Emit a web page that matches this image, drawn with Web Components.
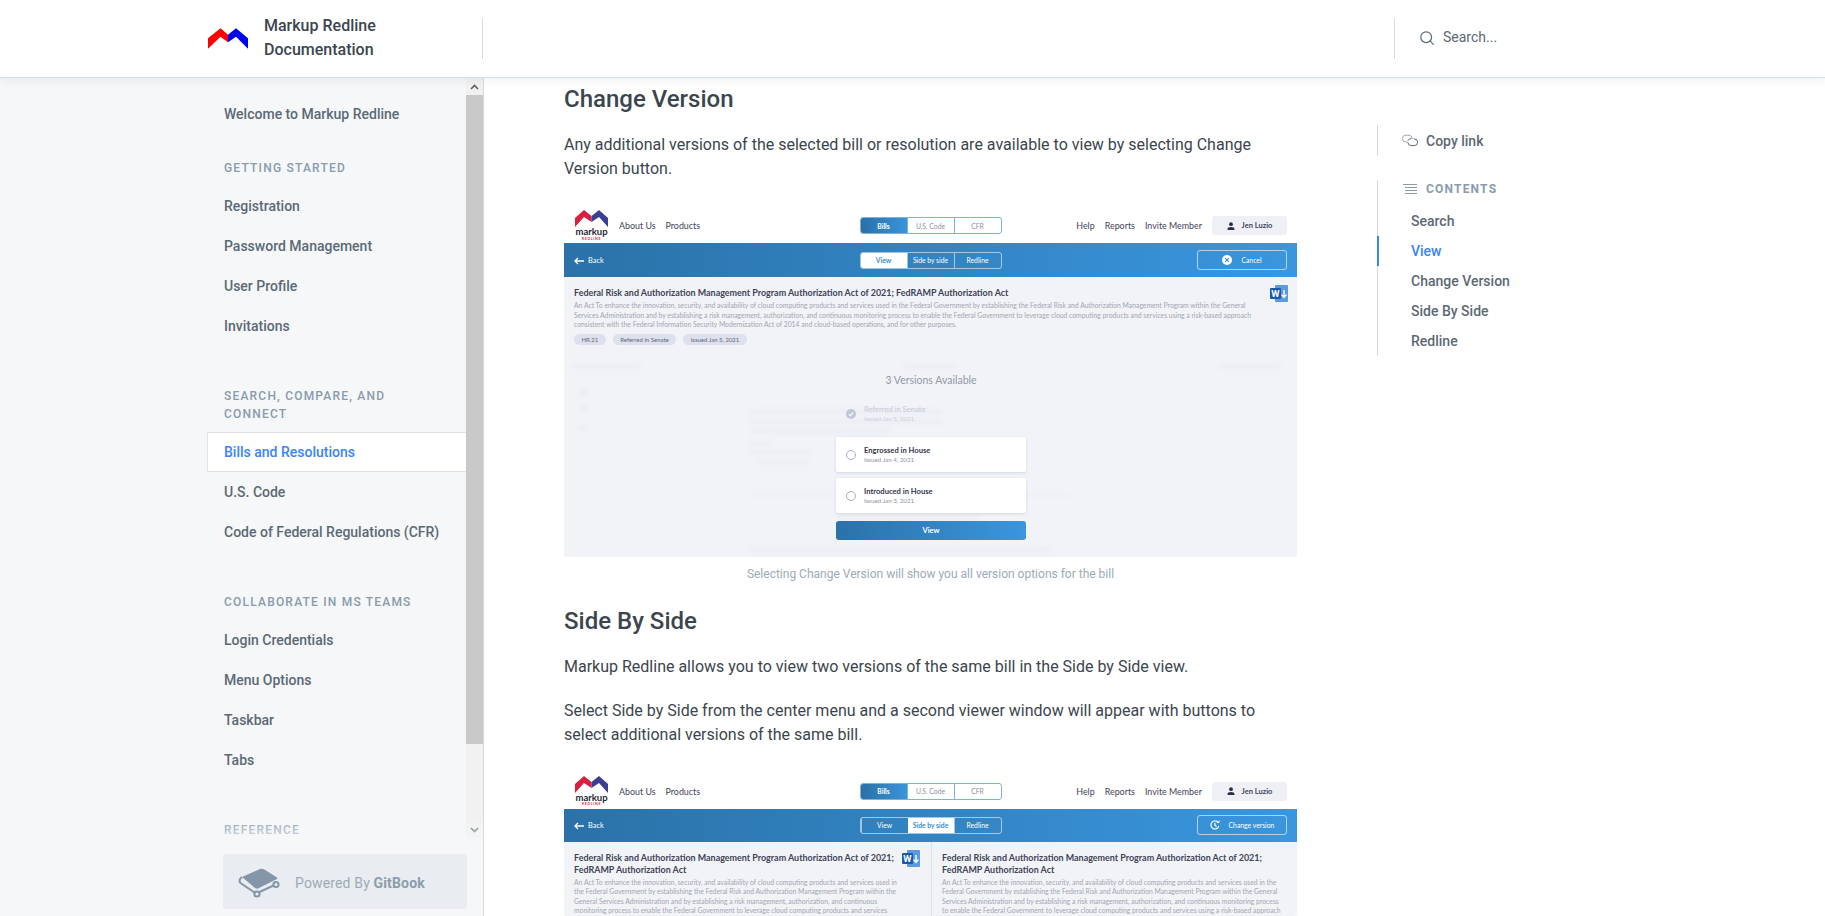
<!DOCTYPE html>
<html lang="en">
<head>
<meta charset="utf-8">
<title>Change Version - Markup Redline Documentation</title>
<style>
    html, body { margin: 0; height: 916px; overflow: hidden; background: #fff; }
    body { font-family: Roboto, "Liberation Sans", sans-serif; }
</style>
</head>
<body>
<doc-app></doc-app>
<script>
const LOGO_POINTS = {
    red: '0,10 12.5,0 20,6.5 20,14 12.5,8.5 0,20.5',
    blue: '20,6.5 28,0 40,10 40,20.5 28,8.5 20,14'
};

class DocHeader extends HTMLElement {
    constructor() {
        super();
        this.attachShadow({ mode: 'open' }).innerHTML = `
            <style>
                :host { display: flex; height: 77px; background: #fff; border-bottom: 1px solid #d4dce4; box-shadow: 0 3px 8px 0 rgba(116,129,141,.1); position: relative; z-index: 3; }
                .brand { width: 483px; display: flex; align-items: center; margin: 18px 0; padding-left: 208px; box-sizing: border-box; border-right: 1px solid #d4dadf; }
                svg.logo { width: 40px; height: 21px; margin: 0 16px 0 0; flex: none; }
                .title { font-size: 16px; line-height: 24px; font-weight: 500; color: #3b454e; margin-top: -1px; }
                .middle { flex: 1; }
                .search { width: 431px; margin: 18px 0; box-sizing: border-box; border-left: 1px solid #d4dadf; display: flex; align-items: center; padding: 0 0 3px 25px; gap: 9px; font-size: 14px; color: #5c6975; }
                .search svg { width: 14px; height: 14px; margin-top: 2px; }
            </style>
            <div class="brand">
                <svg class="logo" viewBox="0 0 40 20.5"><polygon fill="#ff0000" points="${LOGO_POINTS.red}"/><polygon fill="#0000f0" points="${LOGO_POINTS.blue}"/></svg>
                <div class="title">Markup Redline<br>Documentation</div>
            </div>
            <div class="middle"></div>
            <div class="search">
                <svg viewBox="0 0 14 14" fill="none" stroke="#5c6975" stroke-width="1.2" stroke-linecap="round"><circle cx="6.2" cy="6.2" r="5.4"/><line x1="10.2" y1="10.2" x2="13.4" y2="13.4"/></svg>
                <span>Search...</span>
            </div>
        `;
    }
}

class NavItem extends HTMLElement {
    constructor() {
        super();
        this.attachShadow({ mode: 'open' }).innerHTML = `
            <style>
                :host { display: block; height: 40px; line-height: 40px; font-size: 14px; font-weight: 500; color: #5c6975; padding-left: 17px; box-sizing: border-box; }
                :host([active]) { color: #3884ff; background: #fff; border: 1px solid #dfe4ea; border-right: 0; line-height: 38px; padding-left: 16px; }
            </style>
            <slot></slot>
        `;
    }
}

class NavHeading extends HTMLElement {
    constructor() {
        super();
        this.attachShadow({ mode: 'open' }).innerHTML = `
            <style>
                :host { display: block; margin: 40px 50px 8px 17px; padding: 1px 0; font-size: 12px; line-height: 18px; font-weight: 500; letter-spacing: 1.2px; color: #8a9bac; text-transform: uppercase; }
                :host([first]) { margin-top: 24px; }
            </style>
            <slot></slot>
        `;
    }
}

class DocSidebar extends HTMLElement {
    constructor() {
        super();
        this.attachShadow({ mode: 'open' }).innerHTML = `
            <style>
                :host { display: flex; width: 484px; height: 838px; box-sizing: border-box; background: #f5f7f9; border-right: 1px solid #d4dce4; position: relative; overflow: hidden; }
                .scroll { flex: 1; padding: 16px 0 0 207px; height: 838px; box-sizing: border-box; overflow: hidden; }
                .bar { width: 17px; height: 760px; flex: none; display: flex; flex-direction: column; background: #f1f1f1; }
                .arrow { height: 17px; display: flex; align-items: center; justify-content: center; }
                .arrow svg { width: 9px; height: 6px; }
                .thumb { height: 649px; background: #c8c8c8; }
                .rest { flex: 1; }
                .foot { position: absolute; left: 207px; right: 0; bottom: 0; height: 100px; padding: 38px 16px 7px 16px; box-sizing: border-box; background: linear-gradient(to bottom, rgba(245,247,249,0), #f5f7f9 34%); }
                .gitbook { height: 55px; display: flex; align-items: center; gap: 3px; padding-left: 9px; background: #e9edf1; border-radius: 3px; font-size: 14px; color: #9daab6; letter-spacing: .15px; }
                .gitbook span { margin-top: 2px; }
                .gitbook b { color: #8c9cad; font-weight: 700; }
                .gitbook svg { width: 60px; height: 40px; flex: none; }
            </style>
            <div class="scroll">
                <nav-item>Welcome to Markup Redline</nav-item>
                <nav-heading first>Getting Started</nav-heading>
                <nav-item>Registration</nav-item>
                <nav-item>Password Management</nav-item>
                <nav-item>User Profile</nav-item>
                <nav-item>Invitations</nav-item>
                <nav-heading>Search, Compare, and Connect</nav-heading>
                <nav-item active>Bills and Resolutions</nav-item>
                <nav-item>U.S. Code</nav-item>
                <nav-item>Code of Federal Regulations (CFR)</nav-item>
                <nav-heading>Collaborate in MS Teams</nav-heading>
                <nav-item>Login Credentials</nav-item>
                <nav-item>Menu Options</nav-item>
                <nav-item>Taskbar</nav-item>
                <nav-item>Tabs</nav-item>
                <nav-heading>Reference</nav-heading>
            </div>
            <div class="bar">
                <div class="arrow"><svg viewBox="0 0 9 6" fill="none" stroke="#606060" stroke-width="1.6"><path d="M1 5 L4.5 1.5 L8 5"/></svg></div>
                <div class="thumb"></div>
                <div class="rest"></div>
                <div class="arrow"><svg viewBox="0 0 9 6" fill="none" stroke="#606060" stroke-width="1.6"><path d="M1 1 L4.5 4.5 L8 1"/></svg></div>
            </div>
            <div class="foot">
                <div class="gitbook">
                    <svg viewBox="0 0 60 40">
                        <path d="M10 15 L28 7 Q30 6.2 32 7.2 L45 15.5 Q46 16.5 44.5 17.2 L26 26.5 Q24.5 27 23 26 Z" fill="#8496a8"/>
                        <path d="M10 15 Q6 18 8.5 21 L22.5 30.5 M27.5 30 L41.5 23.5" fill="none" stroke="#8496a8" stroke-width="2"/>
                        <circle cx="25" cy="32" r="2.6" fill="none" stroke="#8496a8" stroke-width="2"/>
                        <circle cx="44" cy="22.5" r="2.6" fill="none" stroke="#8496a8" stroke-width="2"/>
                    </svg>
                    <span>Powered By <b>GitBook</b></span>
                </div>
            </div>
        `;
    }
}

class DocToc extends HTMLElement {
    constructor() {
        super();
        this.attachShadow({ mode: 'open' }).innerHTML = `
            <style>
                :host { display: block; padding-top: 47px; font-size: 14px; font-weight: 500; color: #5c6975; }
                .copy { height: 31px; border-left: 1px solid #d4dadf; display: flex; align-items: center; padding-left: 24px; gap: 8px; margin-bottom: 24px; }
                .copy svg { width: 16px; height: 13px; flex: none; }
                .list { border-left: 1px solid #d4dadf; width: 200px; }
                .head { height: 26px; display: flex; align-items: center; padding: 0 0 9px 24px; gap: 8px; box-sizing: border-box; font-size: 12px; font-weight: 700; letter-spacing: 1.2px; color: #8a9bac; }
                .head svg { width: 16px; height: 12px; flex: none; }
                .row { height: 30px; line-height: 30px; padding-left: 33px; }
                .row.on { color: #3884ff; box-shadow: inset 2px 0 0 0 #3884ff; margin-left: -1px; padding-left: 34px; }
            </style>
            <div class="copy">
                <svg viewBox="0 0 16 13" fill="none" stroke-width="1" stroke-linecap="round"><path d="M5 8 H3.8 A3.4 3.4 0 0 1 3.8 1.2 H7 A3.6 3.6 0 0 1 10.4 4.6" stroke="#9aa7b4"/><path d="M6 6.4 A3 3 0 0 1 9 4.6 M5.8 8.6 A3.4 3.4 0 0 0 9 11.6 H12.2 A3.4 3.4 0 0 0 12.2 4.8" stroke="#5c6975"/></svg>
                <span>Copy link</span>
            </div>
            <div class="list">
                <div class="head">
                    <svg viewBox="0 0 16 12" stroke="#8a9bac" stroke-width="1"><path d="M1 1.5 H15 M3 4.5 H15 M3 7.5 H15 M3 10.5 H15"/></svg>
                    <span>CONTENTS</span>
                </div>
                <div class="row">Search</div>
                <div class="row on">View</div>
                <div class="row">Change Version</div>
                <div class="row">Side By Side</div>
                <div class="row">Redline</div>
            </div>
        `;
    }
}

class SegGroup extends HTMLElement {
    constructor() {
        super();
        this.attachShadow({ mode: 'open' });
    }
    connectedCallback() {
        const items = this.getAttribute('items').split('|');
        const active = Number(this.getAttribute('active'));
        const cells = items.map((text, i) => `<div class="cell${i === active ? ' on' : ''}">${text}</div>`).join('');
        this.shadowRoot.innerHTML = `
            <style>
                :host { display: flex; width: 142px; height: 17px; box-sizing: border-box; border: 1px solid var(--seg-line); border-radius: 3px; overflow: hidden; font-size: 6.8px; color: var(--seg-text); background: var(--seg-bg, transparent); }
                .cell { flex: 1; display: flex; align-items: center; justify-content: center; border-left: 1px solid var(--seg-line); white-space: nowrap; }
                .cell:first-child { border-left: 0; }
                .on { background: var(--seg-on); color: var(--seg-on-text); font-weight: 700; border-left: 0; }
            </style>
            ${cells}
        `;
    }
}

class ShotTop extends HTMLElement {
    constructor() {
        super();
        this.attachShadow({ mode: 'open' }).innerHTML = `
            <style>
                :host { display: grid; grid-template-columns: 1fr auto 1fr; align-items: center; height: 35px; padding: 0 10px; background: #fff; font-size: 8.9px; color: #3f4358; --seg-line: #7fb2d8; --seg-text: #8b8fa3; --seg-bg: #fff; --seg-on: linear-gradient(90deg, #2a70a6, #3a94da); --seg-on-text: #fff; }
                .left, .right { display: flex; align-items: center; gap: 10px; white-space: nowrap; }
                .right { justify-content: flex-end; }
                .mark { width: 35px; display: flex; flex-direction: column; align-items: center; line-height: 1; }
                .mark svg { width: 33px; height: 17px; }
                .mark b { font-size: 9.5px; color: #26262e; font-weight: 700; }
                .mark i { font-style: normal; font-weight: 700; font-size: 3.5px; letter-spacing: .7px; color: #d8213f; margin-top: 1px; }
                .user { width: 75px; height: 19px; background: #eef0f6; border-radius: 3px; display: flex; align-items: center; justify-content: center; gap: 7px; font-size: 7.5px; font-weight: 700; color: #3f4358; }
                .user svg { width: 8px; height: 8px; }
            </style>
            <div class="left">
                <div class="mark">
                    <svg viewBox="0 0 33 17"><path d="M0 8 L9 0 L16.5 6 L16.5 12 L9 7 L0 17 Z" fill="#d8213f"/><path d="M16.5 6 L24 0 L33 8 L33 17 L24 7 L16.5 12 Z" fill="#3b3f92"/></svg>
                    <b>markup</b>
                    <i>REDLINE</i>
                </div>
                <span>About Us</span><span>Products</span>
            </div>
            <seg-group items="Bills|U.S. Code|CFR" active="0"></seg-group>
            <div class="right">
                <span>Help</span><span>Reports</span><span>Invite Member</span>
                <div class="user">
                    <svg viewBox="0 0 8 8" fill="#2c2f42"><circle cx="4" cy="2.2" r="1.9"/><path d="M0.6 8 V6.8 Q0.6 5 4 5 Q7.4 5 7.4 6.8 V8 Z"/></svg>
                    <span>Jen Luzio</span>
                </div>
            </div>
        `;
    }
}

class ShotBar extends HTMLElement {
    connectedCallback() {
        const side = this.hasAttribute('side');
        const items = 'View|Side by side|Redline';
        const button = side
            ? `<svg viewBox="0 0 10 10" fill="none" stroke="#fff" stroke-width="1.2"><path d="M8.4 3 A4 4 0 1 0 8.8 6"/><path d="M5 3 V5.4 L6.6 6.4"/><path d="M6.5 0.6 L8.6 3 L9.4 0.6" stroke-width="1"/></svg><span>Change version</span>`
            : `<svg viewBox="0 0 10 10"><circle cx="5" cy="5" r="5" fill="#fff"/><path d="M3.2 3.2 L6.8 6.8 M6.8 3.2 L3.2 6.8" stroke="#3a8ccb" stroke-width="1.1"/></svg><span>Cancel</span>`;
        this.attachShadow({ mode: 'open' }).innerHTML = `
            <style>
                :host { display: grid; grid-template-columns: 1fr auto 1fr; align-items: center; height: 34px; padding: 0 10px; background: linear-gradient(90deg, #2a72a8, #3a96de); color: #fff; font-size: 7.4px; --seg-line: rgba(255,255,255,.55); --seg-text: #fff; --seg-on: #fff; --seg-on-text: #3a8ccb; }
                .back { display: flex; align-items: center; gap: 4px; padding-top: 1px; }
                .back svg { width: 10px; height: 8px; }
                .btn { justify-self: end; width: 90px; height: 20px; box-sizing: border-box; border: 1px solid rgba(255,255,255,.6); border-radius: 3px; display: flex; align-items: center; justify-content: center; gap: 9px; font-size: 6.8px; }
                .btn svg { width: 10px; height: 10px; }
            </style>
            <div class="back">
                <svg viewBox="0 0 10 8" fill="none" stroke="#fff" stroke-width="1.3"><path d="M10 4 H1 M4 1 L1 4 L4 7"/></svg>
                <span>Back</span>
            </div>
            <seg-group items="${items}" active="${side ? 1 : 0}"></seg-group>
            <div class="btn">${button}</div>
        `;
    }
}

class BillInfo extends HTMLElement {
    constructor() {
        super();
        this.attachShadow({ mode: 'open' }).innerHTML = `
            <style>
                :host { display: block; position: relative; padding: 10px 10px 0; color: #3f4358; font-size: 8.95px; font-weight: 700; line-height: 11.5px; }
                :host([noword]) svg { display: none; }
                ::slotted(p) { margin: 2.5px 0 0; font-size: 6.8px; font-weight: 400; line-height: 9.6px; color: #a2a6b2; white-space: nowrap; }
                svg { position: absolute; top: 8px; right: var(--word-right, 9px); width: 18px; height: 17px; }
                svg text { font-family: Roboto, "Liberation Sans", sans-serif; }
            </style>
            <slot></slot>
            <svg viewBox="0 0 18 17"><rect x="5" y="0" width="13" height="17" rx="1" fill="#5a9ae0"/><rect y="3" width="11" height="11" rx="1" fill="#1b5aa8"/><text x="1.2" y="12" font-size="9.5" font-weight="700" fill="#fff">W</text><path d="M14 5 V12 M11.6 9.6 L14 12.4 L16.4 9.6" fill="none" stroke="#fff" stroke-width="1.4"/></svg>
        `;
    }
}

class VersionCard extends HTMLElement {
    constructor() {
        super();
        this.attachShadow({ mode: 'open' }).innerHTML = `
            <style>
                :host { display: flex; align-items: center; gap: 8px; height: 35px; padding-left: 10px; background: #fff; border-radius: 2px; box-shadow: 0 1px 3px rgba(120,130,160,.25); font-size: 7.6px; font-weight: 700; color: #33364a; line-height: 9px; }
                :host([faded]) { background: transparent; box-shadow: none; color: #c6cad6; font-weight: 400; }
                :host([faded]) ::slotted(small) { color: #ccd0da; }
                .radio { width: 8px; height: 8px; border: 1px solid #a8b0c8; border-radius: 50%; flex: none; position: relative; }
                .radio svg { display: none; position: absolute; inset: -1px; width: 10px; height: 10px; }
                :host([faded]) .radio { border-color: transparent; }
                :host([faded]) .radio svg { display: block; }
                ::slotted(small) { display: block; font-size: 6.2px; font-weight: 400; color: #8d91a3; }
            </style>
            <div class="radio"><svg viewBox="0 0 10 10"><circle cx="5" cy="5" r="5" fill="#bfc6da"/><path d="M2.8 5.2 L4.4 6.8 L7.2 3.6" fill="none" stroke="#fff" stroke-width="1.1"/></svg></div>
            <div><slot></slot></div>
        `;
    }
}

class BillShot extends HTMLElement {
    connectedCallback() {
        const title = 'Federal Risk and Authorization Management Program Authorization Act of 2021; FedRAMP Authorization Act';
        const side = this.hasAttribute('side');
        const body = side ? `
            <div class="split">
                <bill-info style="--word-right:11px"><div class="t">Federal Risk and Authorization Management Program Authorization Act of 2021;<br>FedRAMP Authorization Act</div><p>An Act To enhance the innovation, security, and availability of cloud computing products and services used in<br>the Federal Government by establishing the Federal Risk and Authorization Management Program within the<br>General Services Administration and by establishing a risk management, authorization, and continuous<br>monitoring process to enable the Federal Government to leverage cloud computing products and services</p></bill-info>
                <bill-info noword><div class="t">Federal Risk and Authorization Management Program Authorization Act of 2021;<br>FedRAMP Authorization Act</div><p>An Act To enhance the innovation, security, and availability of cloud computing products and services used in the<br>Federal Government by establishing the Federal Risk and Authorization Management Program within the General<br>Services Administration and by establishing a risk management, authorization, and continuous monitoring process<br>to enable the Federal Government to leverage cloud computing products and services using a risk-based approach</p></bill-info>
            </div>
        ` : `
            <bill-info><div class="t">${title}</div><p>An Act To enhance the innovation, security, and availability of cloud computing products and services used in the Federal Government by establishing the Federal Risk and Authorization Management Program within the General<br>Services Administration and by establishing a risk management, authorization, and continuous monitoring process to enable the Federal Government to leverage cloud computing products and services using a risk-based approach<br>consistent with the Federal Information Security Modernization Act of 2014 and cloud-based operations, and for other purposes.</p><div class="chips"><span>HR.21</span><span>Referred in Senate</span><span>Issued Jan 5, 2021</span></div></bill-info>
            <div class="stage">
                <div class="ghost">
                    <div class="g" style="left:10px;top:20px;width:66px;height:3px"></div>
                    <div class="g" style="left:340px;top:20px;width:50px;height:3px"></div>
                    <div class="g" style="left:656px;top:20px;width:60px;height:3px"></div>
                    <div class="g" style="left:16px;top:45px;width:6px;height:6px"></div>
                    <div class="g" style="left:16px;top:60px;width:6px;height:6px"></div>
                    <div class="g" style="left:16px;top:80px;width:6px;height:6px"></div>
                    <div class="g" style="left:187px;top:65px;width:190px;height:3px"></div>
                    <div class="g" style="left:187px;top:75px;width:190px;height:3px"></div>
                    <div class="g" style="left:187px;top:85px;width:140px;height:3px"></div>
                    <div class="g" style="left:187px;top:97px;width:20px;height:3px"></div>
                    <div class="g" style="left:187px;top:106px;width:60px;height:3px"></div>
                    <div class="g" style="left:196px;top:116px;width:48px;height:3px"></div>
                    <div class="g" style="left:187px;top:150px;width:320px;height:1px"></div>
                    <div class="g" style="left:276px;top:170px;width:140px;height:3px"></div>
                    <div class="g" style="left:187px;top:203px;width:300px;height:3px"></div>
                </div>
                <div class="modal">
                    <div class="count">3 Versions Available</div>
                    <version-card faded>Referred in Senate<small>Issued Jan 5, 2021</small></version-card>
                    <version-card>Engrossed in House<small>Issued Jan 4, 2021</small></version-card>
                    <version-card>Introduced in House<small>Issued Jan 3, 2021</small></version-card>
                    <div class="view">View</div>
                </div>
            </div>
        `;
        this.attachShadow({ mode: 'open' }).innerHTML = `
            <style>
                :host { display: flex; flex-direction: column; width: 733px; height: ${side ? 142 : 349}px; overflow: hidden; font-family: Lato, "Open Sans", sans-serif; background: #f1f3f7; border-radius: 3px; }
                .chips { display: flex; gap: 7px; margin-top: 4.5px; height: 11px; }
                .chips span { height: 11px; padding: 0 7.5px; border-radius: 6px; background: #dde1ee; font-size: 6px; font-weight: 400; line-height: 11px; color: #5f6478; }
                .split { display: grid; grid-template-columns: 367px 1fr; flex: 1; }
                .split bill-info + bill-info { border-left: 1px solid #dfe2e8; }
                .stage { flex: 1; position: relative; overflow: hidden; }
                .ghost { position: absolute; inset: 0; filter: blur(2px); }
                .g { position: absolute; background: #e8ebf1; }
                .modal { position: absolute; left: 272px; top: 25px; width: 190px; display: flex; flex-direction: column; gap: 6px; }
                .count { text-align: center; font-size: 10.5px; line-height: 20px; color: #9397ab; }
                .view { height: 19px; line-height: 19px; margin-top: 2px; text-align: center; border-radius: 3px; background: linear-gradient(90deg, #2a72a8, #3a96de); color: #fff; font-size: 7.5px; font-weight: 700; }
            </style>
            <shot-top></shot-top>
            <shot-bar ${side ? 'side' : ''}></shot-bar>
            ${body}
        `;
    }
}

class DocArticle extends HTMLElement {
    constructor() {
        super();
        this.attachShadow({ mode: 'open' }).innerHTML = `
            <style>
                :host { display: block; height: 838px; overflow: hidden; padding: 3px 80px 0; box-sizing: border-box; color: #3b454e; }
                h2 { margin: 0 0 16px; font-size: 24px; line-height: 36px; font-weight: 500; }
                p { margin: 0 0 20px; font-size: 16px; line-height: 24px; width: 700px; }
                p.last { margin-bottom: 27px; }
                .cap { margin: 9px 0 21px; text-align: center; font-size: 12px; line-height: 16px; color: #9daab6; }
            </style>
            <h2>Change Version</h2>
            <p class="last">Any additional versions of the selected bill or resolution are available to view by selecting Change Version button.</p>
            <bill-shot></bill-shot>
            <div class="cap">Selecting Change Version will show you all version options for the bill</div>
            <h2>Side By Side</h2>
            <p>Markup Redline allows you to view two versions of the same bill in the Side by Side view.</p>
            <p class="last">Select Side by Side from the center menu and a second viewer window will appear with buttons to select additional versions of the same bill.</p>
            <bill-shot side></bill-shot>
        `;
    }
}

class DocApp extends HTMLElement {
    constructor() {
        super();
        this.attachShadow({ mode: 'open' }).innerHTML = `
            <style>
                :host { display: block; height: 916px; overflow: hidden; font-family: Roboto, "Liberation Sans", sans-serif; }
                .body { display: grid; grid-template-columns: 484px 893px 1fr; }
            </style>
            <doc-header></doc-header>
            <div class="body">
                <doc-sidebar></doc-sidebar>
                <doc-article></doc-article>
                <doc-toc></doc-toc>
            </div>
        `;
    }
}

customElements.define('doc-header', DocHeader);
customElements.define('nav-item', NavItem);
customElements.define('nav-heading', NavHeading);
customElements.define('doc-sidebar', DocSidebar);
customElements.define('doc-toc', DocToc);
customElements.define('seg-group', SegGroup);
customElements.define('shot-top', ShotTop);
customElements.define('shot-bar', ShotBar);
customElements.define('bill-info', BillInfo);
customElements.define('version-card', VersionCard);
customElements.define('bill-shot', BillShot);
customElements.define('doc-article', DocArticle);
customElements.define('doc-app', DocApp);
</script>
</body>
</html>
